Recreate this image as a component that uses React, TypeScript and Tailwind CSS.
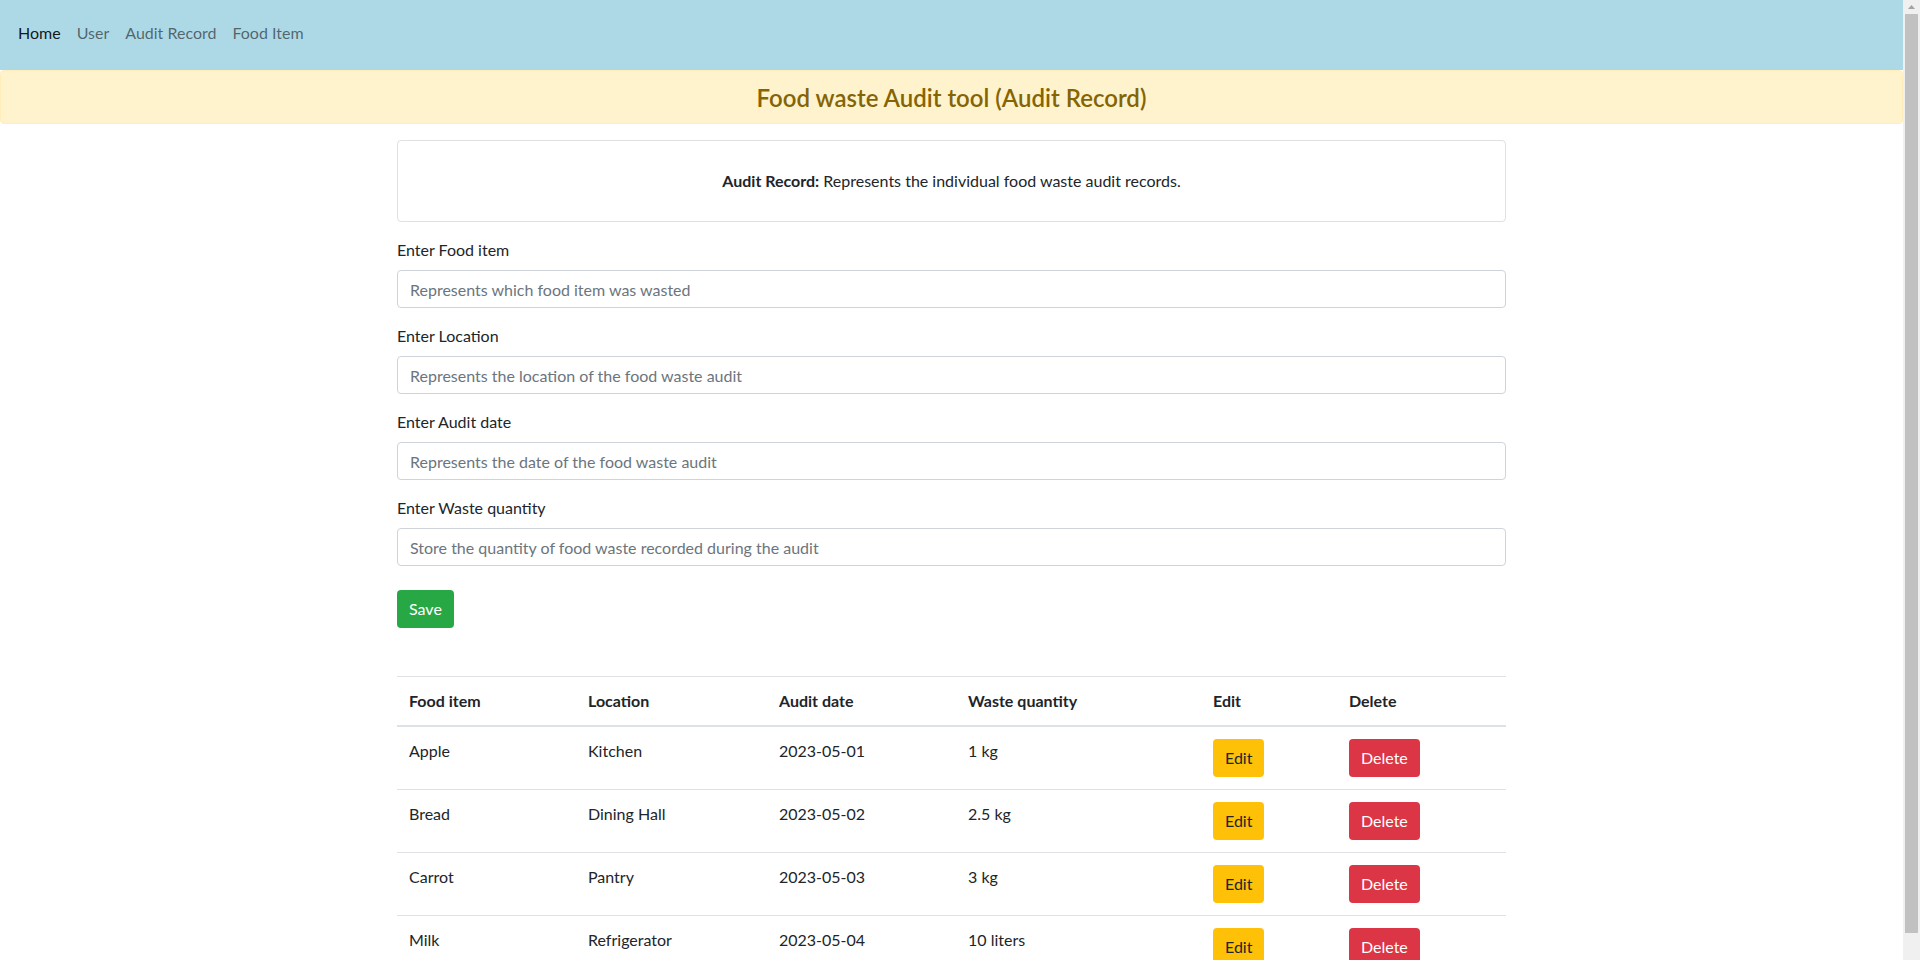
import React from "react";

const rows = [
  { item: "Apple", location: "Kitchen", date: "2023-05-01", qty: "1 kg" },
  { item: "Bread", location: "Dining Hall", date: "2023-05-02", qty: "2.5 kg" },
  { item: "Carrot", location: "Pantry", date: "2023-05-03", qty: "3 kg" },
  { item: "Milk", location: "Refrigerator", date: "2023-05-04", qty: "10 liters" },
];

const fields = [
  { label: "Enter Food item", placeholder: "Represents which food item was wasted" },
  { label: "Enter Location", placeholder: "Represents the location of the food waste audit" },
  { label: "Enter Audit date", placeholder: "Represents the date of the food waste audit" },
  { label: "Enter Waste quantity", placeholder: "Store the quantity of food waste recorded during the audit" },
];

function NavBar() {
  return (
    <nav className="flex h-[70px] items-start bg-[#add8e6] pt-[21px] pl-[10px]">
      <a className="px-2 text-black/90">Home</a>
      <a className="px-2 text-black/55">User</a>
      <a className="px-2 text-black/55">Audit Record</a>
      <a className="px-2 text-black/55">Food Item</a>
    </nav>
  );
}

function Scrollbar() {
  return (
    <div className="flex w-[17px] shrink-0 flex-col bg-[#f0f0f0]">
      <div className="flex h-[14px] items-center justify-center">
        <svg width="7" height="4" viewBox="0 0 7 4">
          <polygon points="3.5,0 7,4 0,4" fill="#a3a3a3" />
        </svg>
      </div>
      <div className="ml-[2px] h-[919px] w-[13px] bg-[#c1c1c1]" />
    </div>
  );
}

export default function App() {
  return (
    <div className="flex h-screen w-full overflow-hidden bg-white font-['Lato',sans-serif] text-base leading-6 text-[#212529]">
      <main className="min-w-0 flex-1 overflow-hidden">
        <NavBar />

        <div className="rounded-[4px] border border-[#ffeeba] bg-[#fff3cd] pt-[13px] pb-[11px] text-center">
          <h4 className="text-[24px] leading-[28px] font-semibold text-[#856404]">
            Food waste Audit tool (Audit Record)
          </h4>
        </div>

        <div className="mx-auto w-[1109px]">
          <div className="mt-4 rounded-[4px] border border-black/12 py-[28px] text-center">
            <b>Audit Record:</b> Represents the individual food waste audit records.
          </div>

          <form className="mt-4">
            {fields.map((f) => (
              <div key={f.label} className="mb-4 flex flex-col">
                <label className="mb-2">{f.label}</label>
                <input
                  placeholder={f.placeholder}
                  className="h-[38px] rounded-[4px] border border-[#ced4da] px-3 placeholder:text-[#6c757d]"
                />
              </div>
            ))}
            <button
              type="button"
              className="mt-2 h-[38px] rounded-[4px] bg-[#28a745] px-3 text-white"
            >
              Save
            </button>
          </form>

          <table className="mt-12 w-full table-fixed border-collapse text-left">
            <colgroup>
              <col className="w-[179px]" />
              <col className="w-[191px]" />
              <col className="w-[189px]" />
              <col className="w-[245px]" />
              <col className="w-[136px]" />
              <col className="w-[169px]" />
            </colgroup>
            <thead>
              <tr className="border-t border-b-2 border-[#dee2e6]">
                <th className="p-3 font-bold">Food item</th>
                <th className="p-3 font-bold">Location</th>
                <th className="p-3 font-bold">Audit date</th>
                <th className="p-3 font-bold">Waste quantity</th>
                <th className="p-3 font-bold">Edit</th>
                <th className="p-3 font-bold">Delete</th>
              </tr>
            </thead>
            <tbody>
              {rows.map((r) => (
                <tr key={r.item} className="border-t border-[#dee2e6] align-top">
                  <td className="p-3">{r.item}</td>
                  <td className="p-3">{r.location}</td>
                  <td className="p-3">{r.date}</td>
                  <td className="p-3">{r.qty}</td>
                  <td className="p-3">
                    <button className="h-[38px] rounded-[4px] bg-[#ffc107] px-3 text-[#212529]">Edit</button>
                  </td>
                  <td className="p-3">
                    <button className="h-[38px] rounded-[4px] bg-[#dc3545] px-3 text-white">Delete</button>
                  </td>
                </tr>
              ))}
            </tbody>
          </table>
        </div>
      </main>
      <Scrollbar />
    </div>
  );
}
